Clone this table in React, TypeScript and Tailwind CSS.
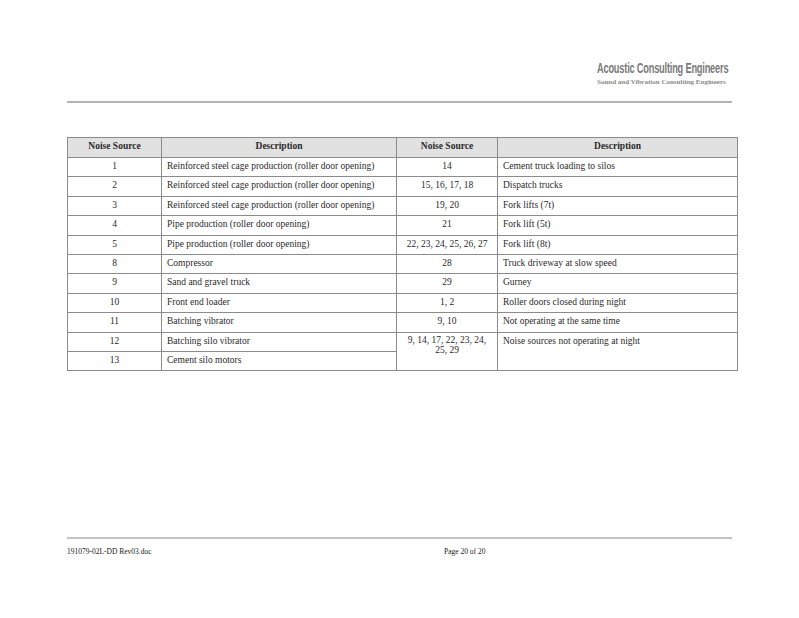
const rows: [string, string][] = [
  ["1", "Reinforced steel cage production (roller door opening)"],
  ["2", "Reinforced steel cage production (roller door opening)"],
  ["3", "Reinforced steel cage production (roller door opening)"],
  ["4", "Pipe production (roller door opening)"],
  ["5", "Pipe production (roller door opening)"],
  ["8", "Compressor"],
  ["9", "Sand and gravel truck"],
  ["10", "Front end loader"],
  ["11", "Batching vibrator"],
  ["12", "Batching silo vibrator"],
  ["13", "Cement silo motors"],
];

const right: [string, string][] = [
  ["14", "Cement truck loading to silos"],
  ["15, 16, 17, 18", "Dispatch trucks"],
  ["19, 20", "Fork lifts (7t)"],
  ["21", "Fork lift (5t)"],
  ["22, 23, 24, 25, 26, 27", "Fork lift (8t)"],
  ["28", "Truck driveway at slow speed"],
  ["29", "Gurney"],
  ["1, 2", "Roller doors closed during night"],
  ["9, 10", "Not operating at the same time"],
];

const cell = "border border-[#8c8c8c] align-top pt-[2px]";

export default function App() {
  return (
    <div
      className="w-[799px] h-[618px] bg-white text-[#2a2a2a] overflow-hidden"
      style={{ fontFamily: '"Liberation Serif", "Times New Roman", serif' }}
    >
      <div className="pt-[59px] pl-[597px]">
        <div
          className="block w-max origin-left scale-x-[0.66] text-[14px] leading-[18px] font-bold text-[#7a7a7a] tracking-[-0.3px] whitespace-nowrap"
          style={{ fontFamily: '"Liberation Sans", Arial, sans-serif' }}
        >
          Acoustic Consulting Engineers
        </div>
        <div className="text-[7px] leading-[9px] font-bold text-[#8a8a8a] whitespace-nowrap mt-[1px]">
          Sound and Vibration Consulting Engineers
        </div>
      </div>
      <div className="ml-[67px] w-[665px] h-[2px] bg-[#b4b4b4] mt-[14px]" />

      <table className="ml-[67px] mt-[34px] w-[670px] border-collapse table-fixed text-[9.5px] leading-[12px]">
        <colgroup>
          <col className="w-[94px]" />
          <col className="w-[235px]" />
          <col className="w-[101px]" />
          <col className="w-[240px]" />
        </colgroup>
        <thead>
          <tr className="h-[20px] bg-[#e1e1e1] font-bold">
            <th className={`${cell} text-center`}>Noise Source</th>
            <th className={`${cell} text-center`}>Description</th>
            <th className={`${cell} text-center`}>Noise Source</th>
            <th className={`${cell} text-center`}>Description</th>
          </tr>
        </thead>
        <tbody>
          {rows.map(([n, d], i) => (
            <tr key={i} className="h-[19.4px]">
              <td className={`${cell} text-center`}>{n}</td>
              <td className={`${cell} pl-[5px]`}>{d}</td>
              {i < right.length && (
                <>
                  <td className={`${cell} text-center`}>{right[i][0]}</td>
                  <td className={`${cell} pl-[5px]`}>{right[i][1]}</td>
                </>
              )}
              {i === right.length && (
                <>
                  <td rowSpan={2} className={`${cell} text-center leading-[10px] px-[8px]`}>
                    9, 14, 17, 22, 23, 24, 25, 29
                  </td>
                  <td rowSpan={2} className={`${cell} pl-[5px]`}>
                    Noise sources not operating at night
                  </td>
                </>
              )}
            </tr>
          ))}
        </tbody>
      </table>

      <div className="ml-[67px] w-[665px] h-[2px] bg-[#c4c4c4] mt-[166px]" />
      <div className="ml-[67px] mt-[8px] flex text-[7.5px] leading-[10px] text-[#222]">
        <span className="w-[377px]">191079-02L-DD Rev03.doc</span>
        <span>Page 20 of 20</span>
      </div>
    </div>
  );
}
